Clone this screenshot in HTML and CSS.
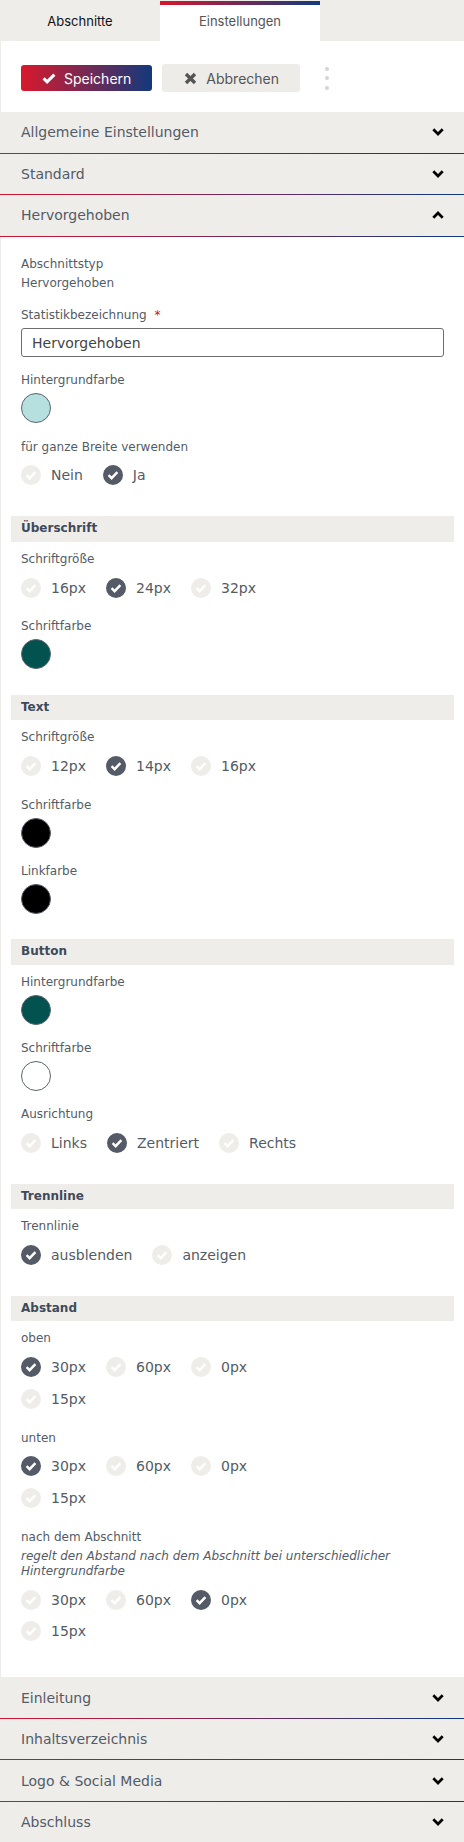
FILE: index.html
```html
<!DOCTYPE html>
<html lang="de">
<head>
<meta charset="utf-8">
<title>Einstellungen</title>
<link rel="stylesheet" href="styles.css">
</head>
<body>
<div class="tabs">
  <div class="tab">Abschnitte</div>
  <div class="tab tab-active">Einstellungen</div>
</div>

<div class="toolbar">
  <button class="btn btn-primary" type="button">
    <svg class="btn-icon" width="14" height="11" viewBox="0 0 14 11"><polyline points="1.6,5.4 5.1,8.8 12.4,1.6" fill="none" stroke="#fff" stroke-width="3"/></svg>
    Speichern
  </button>
  <button class="btn btn-secondary" type="button">
    <svg class="btn-icon" width="13" height="13" viewBox="0 0 13 13"><path d="M2 2L11 11M11 2L2 11" fill="none" stroke="#555" stroke-width="3.4"/></svg>
    Abbrechen
  </button>
  <div class="kebab"><span></span><span></span><span></span></div>
</div>

<div class="acc-header"><span>Allgemeine Einstellungen</span><svg class="chev" width="12" height="8" viewBox="0 0 12 8"><polyline points="1.3,1.3 6,6 10.7,1.3" /></svg></div>
<div class="acc-header"><span>Standard</span><svg class="chev" width="12" height="8" viewBox="0 0 12 8"><polyline points="1.3,1.3 6,6 10.7,1.3" /></svg></div>
<div class="acc-header"><span>Hervorgehoben</span><svg class="chev" width="12" height="8" viewBox="0 0 12 8"><polyline points="1.3,6.7 6,2 10.7,6.7" /></svg></div>

<div class="panel">
  <div class="section fields">
    <div class="field">
      <div class="label label-tight">Abschnittstyp</div>
      <div class="value">Hervorgehoben</div>
    </div>
    <div class="field">
      <div class="label">Statistikbezeichnung<span class="req">*</span></div>
      <input class="input" type="text" value="Hervorgehoben">
    </div>
    <div class="field">
      <div class="label">Hintergrundfarbe</div>
      <div class="swatch swatch-light"></div>
    </div>
    <div class="field">
      <div class="label">für ganze Breite verwenden</div>
      <div class="radio-group">
        <label class="radio"><svg class="rm" viewBox="0 0 20 20"><circle cx="10" cy="10" r="10"/><path d="M5.6 10.2l3 3 5.8-6.1"/></svg>Nein</label>
        <label class="radio checked"><svg class="rm" viewBox="0 0 20 20"><circle cx="10" cy="10" r="10"/><path d="M5.6 10.2l3 3 5.8-6.1"/></svg>Ja</label>
      </div>
    </div>
  </div>

  <div class="section">
    <div class="group-title">Überschrift</div>
    <div class="fields">
      <div class="field">
        <div class="label">Schriftgröße</div>
        <div class="radio-group">
          <label class="radio"><svg class="rm" viewBox="0 0 20 20"><circle cx="10" cy="10" r="10"/><path d="M5.6 10.2l3 3 5.8-6.1"/></svg>16px</label>
          <label class="radio checked"><svg class="rm" viewBox="0 0 20 20"><circle cx="10" cy="10" r="10"/><path d="M5.6 10.2l3 3 5.8-6.1"/></svg>24px</label>
          <label class="radio"><svg class="rm" viewBox="0 0 20 20"><circle cx="10" cy="10" r="10"/><path d="M5.6 10.2l3 3 5.8-6.1"/></svg>32px</label>
        </div>
      </div>
      <div class="field">
        <div class="label">Schriftfarbe</div>
        <div class="swatch swatch-teal"></div>
      </div>
    </div>
  </div>

  <div class="section">
    <div class="group-title">Text</div>
    <div class="fields">
      <div class="field">
        <div class="label">Schriftgröße</div>
        <div class="radio-group">
          <label class="radio"><svg class="rm" viewBox="0 0 20 20"><circle cx="10" cy="10" r="10"/><path d="M5.6 10.2l3 3 5.8-6.1"/></svg>12px</label>
          <label class="radio checked"><svg class="rm" viewBox="0 0 20 20"><circle cx="10" cy="10" r="10"/><path d="M5.6 10.2l3 3 5.8-6.1"/></svg>14px</label>
          <label class="radio"><svg class="rm" viewBox="0 0 20 20"><circle cx="10" cy="10" r="10"/><path d="M5.6 10.2l3 3 5.8-6.1"/></svg>16px</label>
        </div>
      </div>
      <div class="field">
        <div class="label">Schriftfarbe</div>
        <div class="swatch swatch-black"></div>
      </div>
      <div class="field">
        <div class="label">Linkfarbe</div>
        <div class="swatch swatch-black"></div>
      </div>
    </div>
  </div>

  <div class="section">
    <div class="group-title">Button</div>
    <div class="fields">
      <div class="field">
        <div class="label">Hintergrundfarbe</div>
        <div class="swatch swatch-teal"></div>
      </div>
      <div class="field">
        <div class="label">Schriftfarbe</div>
        <div class="swatch swatch-white"></div>
      </div>
      <div class="field">
        <div class="label">Ausrichtung</div>
        <div class="radio-group">
          <label class="radio"><svg class="rm" viewBox="0 0 20 20"><circle cx="10" cy="10" r="10"/><path d="M5.6 10.2l3 3 5.8-6.1"/></svg>Links</label>
          <label class="radio checked"><svg class="rm" viewBox="0 0 20 20"><circle cx="10" cy="10" r="10"/><path d="M5.6 10.2l3 3 5.8-6.1"/></svg>Zentriert</label>
          <label class="radio"><svg class="rm" viewBox="0 0 20 20"><circle cx="10" cy="10" r="10"/><path d="M5.6 10.2l3 3 5.8-6.1"/></svg>Rechts</label>
        </div>
      </div>
    </div>
  </div>

  <div class="section">
    <div class="group-title">Trennline</div>
    <div class="fields">
      <div class="field">
        <div class="label">Trennlinie</div>
        <div class="radio-group">
          <label class="radio checked"><svg class="rm" viewBox="0 0 20 20"><circle cx="10" cy="10" r="10"/><path d="M5.6 10.2l3 3 5.8-6.1"/></svg>ausblenden</label>
          <label class="radio"><svg class="rm" viewBox="0 0 20 20"><circle cx="10" cy="10" r="10"/><path d="M5.6 10.2l3 3 5.8-6.1"/></svg>anzeigen</label>
        </div>
      </div>
    </div>
  </div>

  <div class="section section-last">
    <div class="group-title">Abstand</div>
    <div class="fields">
      <div class="field">
        <div class="label">oben</div>
        <div class="radio-group">
          <label class="radio checked"><svg class="rm" viewBox="0 0 20 20"><circle cx="10" cy="10" r="10"/><path d="M5.6 10.2l3 3 5.8-6.1"/></svg>30px</label>
          <label class="radio"><svg class="rm" viewBox="0 0 20 20"><circle cx="10" cy="10" r="10"/><path d="M5.6 10.2l3 3 5.8-6.1"/></svg>60px</label>
          <label class="radio"><svg class="rm" viewBox="0 0 20 20"><circle cx="10" cy="10" r="10"/><path d="M5.6 10.2l3 3 5.8-6.1"/></svg>0px</label>
          <label class="radio"><svg class="rm" viewBox="0 0 20 20"><circle cx="10" cy="10" r="10"/><path d="M5.6 10.2l3 3 5.8-6.1"/></svg>15px</label>
        </div>
      </div>
      <div class="field">
        <div class="label">unten</div>
        <div class="radio-group">
          <label class="radio checked"><svg class="rm" viewBox="0 0 20 20"><circle cx="10" cy="10" r="10"/><path d="M5.6 10.2l3 3 5.8-6.1"/></svg>30px</label>
          <label class="radio"><svg class="rm" viewBox="0 0 20 20"><circle cx="10" cy="10" r="10"/><path d="M5.6 10.2l3 3 5.8-6.1"/></svg>60px</label>
          <label class="radio"><svg class="rm" viewBox="0 0 20 20"><circle cx="10" cy="10" r="10"/><path d="M5.6 10.2l3 3 5.8-6.1"/></svg>0px</label>
          <label class="radio"><svg class="rm" viewBox="0 0 20 20"><circle cx="10" cy="10" r="10"/><path d="M5.6 10.2l3 3 5.8-6.1"/></svg>15px</label>
        </div>
      </div>
      <div class="field">
        <div class="label">nach dem Abschnitt</div>
        <div class="help">regelt den Abstand nach dem Abschnitt bei unterschiedlicher Hintergrundfarbe</div>
        <div class="radio-group">
          <label class="radio"><svg class="rm" viewBox="0 0 20 20"><circle cx="10" cy="10" r="10"/><path d="M5.6 10.2l3 3 5.8-6.1"/></svg>30px</label>
          <label class="radio"><svg class="rm" viewBox="0 0 20 20"><circle cx="10" cy="10" r="10"/><path d="M5.6 10.2l3 3 5.8-6.1"/></svg>60px</label>
          <label class="radio checked"><svg class="rm" viewBox="0 0 20 20"><circle cx="10" cy="10" r="10"/><path d="M5.6 10.2l3 3 5.8-6.1"/></svg>0px</label>
          <label class="radio"><svg class="rm" viewBox="0 0 20 20"><circle cx="10" cy="10" r="10"/><path d="M5.6 10.2l3 3 5.8-6.1"/></svg>15px</label>
        </div>
      </div>
    </div>
  </div>
</div>

<div class="acc-header"><span>Einleitung</span><svg class="chev" width="12" height="8" viewBox="0 0 12 8"><polyline points="1.3,1.3 6,6 10.7,1.3" /></svg></div>
<div class="acc-header"><span>Inhaltsverzeichnis</span><svg class="chev" width="12" height="8" viewBox="0 0 12 8"><polyline points="1.3,1.3 6,6 10.7,1.3" /></svg></div>
<div class="acc-header"><span>Logo &amp; Social Media</span><svg class="chev" width="12" height="8" viewBox="0 0 12 8"><polyline points="1.3,1.3 6,6 10.7,1.3" /></svg></div>
<div class="acc-header"><span>Abschluss</span><svg class="chev" width="12" height="8" viewBox="0 0 12 8"><polyline points="1.3,1.3 6,6 10.7,1.3" /></svg></div>
</body>
</html>
```

FILE: styles.css
```css
* {
  box-sizing: border-box;
}

body {
  margin: 0;
  width: 464px;
  background: #fff;
  font-family: "DejaVu Sans", Verdana, sans-serif;
  color: #535b67;
}

/* Tabs */
.tabs {
  display: flex;
  height: 41px;
  background: #efedea;
}

.tab {
  width: 160px;
  display: flex;
  align-items: center;
  justify-content: center;
  font-family: Inter, "Liberation Sans", sans-serif;
  font-size: 13px;
  color: #111;
}

.tab-active {
  margin-top: 1px;
  padding-bottom: 4px;
  background: #fff;
  color: #555;
  border-top: 4px solid #d5162e;
  border-image: linear-gradient(90deg, #d8172c, #0f3b7e) 1;
}

/* Toolbar */
.toolbar {
  display: flex;
  align-items: center;
  padding: 23px 20px 20px;
  border-left: 1px solid #efedea;
}

.btn {
  display: inline-flex;
  align-items: center;
  gap: 8px;
  border: 0;
  border-radius: 3px;
  font-family: Inter, "Liberation Sans", sans-serif;
  font-size: 14px;
  cursor: pointer;
}

.btn-icon {
  flex: none;
}

.btn-primary {
  height: 26px;
  padding: 0 21px;
  background: linear-gradient(90deg, #d9192c, #12397c);
  color: #fff;
}

.btn-secondary {
  height: 28px;
  margin-left: 10px;
  padding: 0 21px 0 22px;
  gap: 9px;
  background: #eeece9;
  color: #555;
}

.kebab {
  display: flex;
  flex-direction: column;
  gap: 5.5px;
  margin-left: 25px;
}

.kebab span {
  width: 4px;
  height: 4px;
  border-radius: 50%;
  background: #d4d4d4;
}

/* Accordion headers */
.acc-header {
  height: 41.5px;
  display: flex;
  align-items: center;
  justify-content: space-between;
  padding: 0 20px 0 21px;
  background: #efedea;
  font-size: 14px;
  color: #535b67;
  border-bottom: 1px solid #d3132f;
  border-image: linear-gradient(90deg, #d3132f, #0e3b7d) 1;
}

.chev polyline {
  fill: none;
  stroke: #000;
  stroke-width: 2.7;
}

/* Open panel */
.panel {
  border-left: 1px solid #efedea;
  padding: 18.5px 10px 5px;
}

.section {
  padding-bottom: 11px;
}

.fields {
  padding: 0 10px;
}

.section.fields {
  padding: 0 10px 11px;
}

.field {
  margin-bottom: 14.2px;
}

.fields::after {
  content: "";
  display: table;
}

.label {
  font-size: 12px;
  line-height: 18px;
  margin-bottom: 4px;
}

.label-tight {
  margin-bottom: 1px;
}

.value {
  font-size: 12px;
  line-height: 18px;
}

.req {
  margin-left: 8px;
  color: #e1061d;
}

.input {
  display: block;
  width: 100%;
  height: 29px;
  margin: 0;
  padding: 0 10px;
  border: 1px solid #6e6e6e;
  border-radius: 3px;
  font-family: "DejaVu Sans", Verdana, sans-serif;
  font-size: 14px;
  color: #444;
  background: #fff;
}

.swatch {
  width: 30px;
  height: 30px;
  border-radius: 50%;
  border: 1px solid #5b6371;
}

.swatch-light { background: #b6dfe0; }
.swatch-teal { background: #02524f; }
.swatch-black { background: #000; }
.swatch-white { background: #fff; }

.group-title {
  height: 25.5px;
  line-height: 25.5px;
  margin-bottom: 8px;
  padding: 0 10px;
  background: #efedea;
  font-size: 12px;
  font-weight: bold;
  color: #3e4a5a;
}

.radio-group {
  display: flex;
  flex-wrap: wrap;
  column-gap: 20px;
  max-width: 300px;
}

.radio {
  display: flex;
  align-items: center;
  gap: 10px;
  height: 31.5px;
  font-size: 14px;
  color: #535b67;
}

.rm {
  width: 20px;
  height: 20px;
  flex: none;
}

.rm circle {
  fill: #efedea;
}

.rm path {
  fill: none;
  stroke: #fff;
  stroke-width: 2.4;
}

.radio.checked .rm circle {
  fill: #555a67;
}

.help {
  margin: -1px 0 6px;
  font-size: 12px;
  line-height: 14.7px;
  font-style: italic;
}
```
